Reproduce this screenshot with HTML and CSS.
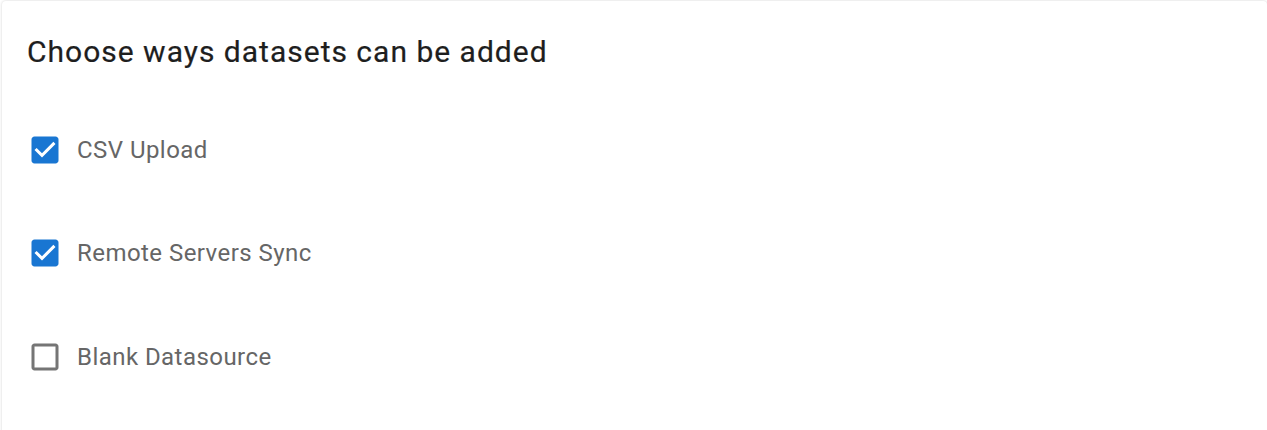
FILE: index.html
```html
<!DOCTYPE html>
<html>
<head>
  <title>Dataset settings</title>
  <link rel="stylesheet" href="styles.css">
</head>
<body>
  <div class="card">
    <h2 class="card-title">Choose ways datasets can be added</h2>

    <div class="options">
      <label class="option">
        <span class="box checked">
          <svg viewBox="0 0 24 24"><path d="M19 3H5c-1.11 0-2 .9-2 2v14c0 1.1.89 2 2 2h14c1.11 0 2-.9 2-2V5c0-1.1-.89-2-2-2zm-9 14l-5-5 1.41-1.41L10 14.17l7.59-7.59L19 8l-9 9z"/></svg>
        </span>
        <span class="option-text">CSV Upload</span>
      </label>

      <label class="option">
        <span class="box checked">
          <svg viewBox="0 0 24 24"><path d="M19 3H5c-1.11 0-2 .9-2 2v14c0 1.1.89 2 2 2h14c1.11 0 2-.9 2-2V5c0-1.1-.89-2-2-2zm-9 14l-5-5 1.41-1.41L10 14.17l7.59-7.59L19 8l-9 9z"/></svg>
        </span>
        <span class="option-text">Remote Servers Sync</span>
      </label>

      <label class="option">
        <span class="box">
          <svg viewBox="0 0 24 24"><path d="M19 5v14H5V5h14m0-2H5c-1.1 0-2 .9-2 2v14c0 1.1.9 2 2 2h14c1.1 0 2-.9 2-2V5c0-1.1-.9-2-2-2z"/></svg>
        </span>
        <span class="option-text">Blank Datasource</span>
      </label>
    </div>
  </div>
</body>
</html>
```

FILE: styles.css
```css
body {
  margin: 0;
  font-family: Roboto, "Liberation Sans", sans-serif;
  background-color: #ffffff;
}

.card {
  margin: 1px 0 0 2px;
  height: 440px;
  padding: 0 0 0 25px;
  background-color: #fff;
  box-shadow: 0 0 3px rgba(0, 0, 0, 0.18);
  border-radius: 4px;
}

.card-title {
  margin: 0;
  padding-top: 31px;
  font-size: 30px;
  font-weight: 400;
  letter-spacing: 1px;
  line-height: 40px;
  color: #1e1e1e;
  -webkit-text-stroke: 0.2px #1e1e1e;
}

.options {
  display: flex;
  flex-direction: column;
  margin-top: 26px;
}

.option {
  display: flex;
  align-items: center;
  height: 103.5px;
  cursor: pointer;
}

.box {
  display: flex;
  width: 36px;
  height: 36px;
  color: #757575;
}

.box.checked {
  color: #1976d2;
}

.box svg {
  width: 36px;
  height: 36px;
  fill: currentColor;
}

.option-text {
  margin-left: 14px;
  font-size: 24px;
  letter-spacing: 0.45px;
  color: #666;
}
```
